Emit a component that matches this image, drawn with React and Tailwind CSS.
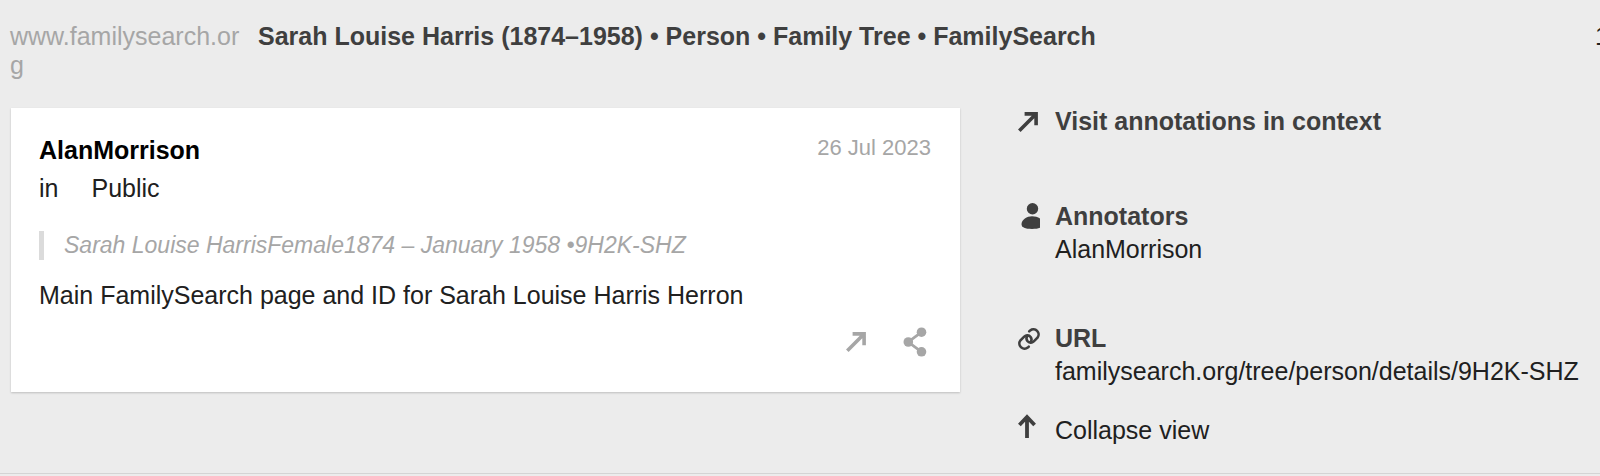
import React from "react";

const ArrowUpRightIcon = ({ className }) => (
  <svg viewBox="0 0 20 20" className={className} fill="none" stroke="currentColor" strokeWidth="3.6" aria-hidden="true">
    <path d="M1.300 18.700L17.500 2.500M6.600 1.900h11.500v11.400" />
  </svg>
);

const ShareIcon = ({ className }) => (
  <svg viewBox="0 0 24 30" className={className} fill="currentColor" aria-hidden="true">
    <path d="M18.5 5.2L5.3 15l13.200 9.800" fill="none" stroke="currentColor" strokeWidth="2.8" />
    <circle cx="18.5" cy="5.200" r="4.800" />
    <circle cx="5.300" cy="15" r="4.800" />
    <circle cx="18.5" cy="24.800" r="4.800" />
  </svg>
);

const PersonIcon = ({ className }) => (
  <svg viewBox="0 0 20 26" className={className} fill="currentColor" aria-hidden="true">
    <circle cx="11.500" cy="5.800" r="5.700" />
    <path d="M.5 21C.5 16.800 6 13.300 11 13.300c3 0 5.800.8 8 2.200v9.200c-2 .8-4.500 1.200-8 1.200C4 25.900.5 24.500.5 21z" />
  </svg>
);

const LinkIcon = ({ className }) => (
  <svg viewBox="0 0 24 24" className={className} fill="none" stroke="currentColor" strokeWidth="2.6" strokeLinecap="round" aria-hidden="true">
    <path d="M10.200 8.800a4.800 4.800 0 0 0 .2 5.200c1.600 2.100 4.500 2.200 6.400.4l3.700-3.700a5.200 5.200 0 0 0-7.300-7.300l-1 1" />
    <path d="M13.800 15.200a4.800 4.800 0 0 0-.2-5.200c-1.600-2.100-4.500-2.200-6.400-.4l-3.700 3.700a5.200 5.200 0 0 0 7.300 7.300l1-1" />
  </svg>
);

const ArrowUpIcon = ({ className }) => (
  <svg viewBox="0 0 18 24" className={className} fill="none" stroke="currentColor" strokeWidth="3.8" aria-hidden="true">
    <path d="M9 24V3M1.400 11L9 3l7.600 8" />
  </svg>
);

const AnnotationCard = () => {
  return (
    <article className="bg-white pt-[26px] pr-[29px] pb-[35px] pl-7 shadow-[0_1px_2px_rgba(0,0,0,0.2)]">
      <header className="flex items-start justify-between">
        <h2 className="leading-8 font-bold text-black">
          <a href="#user">AlanMorrison</a>
        </h2>
        <time dateTime="2023-07-26" className="text-[22px] leading-7 text-[#a6a6a6]">
          26 Jul 2023
        </time>
      </header>
      <p className="mt-1.5 flex gap-[33px] leading-8 text-[#202020]">
        <span>in</span>
        <a href="#public">Public</a>
      </p>
      <blockquote className="mt-[27px] border-l-[5px] border-[#dbdbdb] pl-5 text-[23px] leading-[29px] text-[#a6a6a6] italic">
        Sarah Louise HarrisFemale1874 – January 1958 •9H2K-SHZ
      </blockquote>
      <p className="mt-[19px] leading-8 text-[#202020]">
        Main FamilySearch page and ID for Sarah Louise Harris Herron
      </p>
      <footer className="mt-4 flex items-center justify-end gap-[37px] pr-1 text-[#a6a6a6]">
        <a href="#annotation" aria-label="Visit annotation in context">
          <ArrowUpRightIcon className="size-5" />
        </a>
        <button type="button" aria-label="Share this annotation">
          <ShareIcon className="h-[30px] w-6" />
        </button>
      </footer>
    </article>
  );
};

const Sidebar = () => {
  return (
    <aside className="flex-1 pl-[57px] leading-[33px] text-[#202020]">
      <a href="#context" className="flex items-center font-bold text-[#3f3f3f]">
        <span className="w-[38px] pl-px">
          <ArrowUpRightIcon className="size-5" />
        </span>
        Visit annotations in context
      </a>
      <section className="mt-[62px] flex">
        <span className="w-[38px] pt-[3px] pl-1 text-[#3f3f3f]">
          <PersonIcon className="h-[26px] w-5" />
        </span>
        <div>
          <h3 className="font-bold text-[#3f3f3f]">Annotators</h3>
          <a href="#alan">AlanMorrison</a>
        </div>
      </section>
      <section className="mt-14 flex">
        <span className="w-[38px] pt-[5px] text-[#3f3f3f]">
          <LinkIcon className="size-6" />
        </span>
        <div>
          <h3 className="font-bold text-[#3f3f3f]">URL</h3>
          <a href="#url">familysearch.org/tree/person/details/9H2K-SHZ</a>
        </div>
      </section>
      <button type="button" className="mt-[26px] flex">
        <span className="w-[38px] pl-px text-[#3f3f3f]">
          <ArrowUpIcon className="h-6 w-[18px]" />
        </span>
        Collapse view
      </button>
    </aside>
  );
};

const App = () => {
  return (
    <div className="min-h-screen bg-[#ececec]">
      <main className="overflow-hidden border-b border-[#d4d4d4] pt-[22px] pb-[26px] font-['Liberation_Sans',Arial,sans-serif] text-[25px]">
        <div className="flex items-start pl-2.5 leading-[29px]">
          <a href="#domain" className="w-[230px] shrink-0 break-all text-[#a6a6a6]">
            www.familysearch.org
          </a>
          <h1 className="ml-[18px] flex-1 font-bold text-[#3f3f3f]">
            Sarah Louise Harris (1874–1958) • Person • Family Tree • FamilySearch
          </h1>
          {/* annotation count */}
          <span className="w-[5px] overflow-hidden text-[#202020]">1</span>
        </div>
        <div className="mt-[25px] flex items-start">
          <div className="w-3/5 pt-[3px] pl-[11px]">
            <AnnotationCard />
          </div>
          <Sidebar />
        </div>
      </main>
    </div>
  );
};

export default App;
